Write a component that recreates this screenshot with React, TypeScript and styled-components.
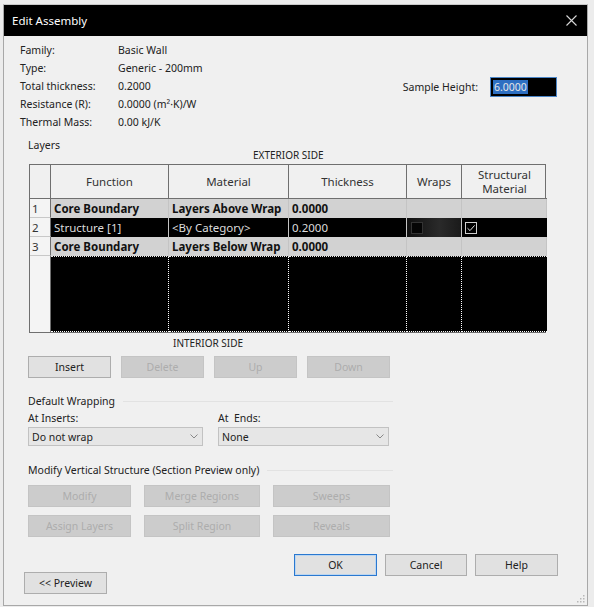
import React from "react";
import styled, { createGlobalStyle } from "styled-components";

const GlobalStyle = createGlobalStyle`
  html, body { margin: 0; padding: 0; }
  body {
    background: #ececec;
    font-family: "Noto Sans", "Open Sans", sans-serif;
    font-size: 10.5px;
    color: #222;
  }
`;

const Window = styled.div`
  margin: 4px 0 0 3px;
  width: 583px;
  height: 600px;
  background: #f0f0f0;
  border: 1px solid #a8a8a8;
  border-top-color: #c8c8c8;
  display: flex;
  flex-direction: column;
  position: relative;
`;

const TitleBar = styled.div`
  height: 31px;
  background: #000;
  color: #fff;
  display: flex;
  align-items: center;
  justify-content: space-between;
  padding: 0 10px 0 8px;
  font-size: 11.5px;
`;

const CloseBtn = styled.svg`
  width: 11px;
  height: 11px;
`;

const InfoBlock = styled.div`
  display: flex;
  padding: 5px 30px 0 16px;
`;

const InfoGrid = styled.div`
  display: grid;
  grid-template-columns: 98px 150px;
  grid-auto-rows: 18px;
  align-items: center;
`;

const SampleRow = styled.div`
  margin-left: auto;
  margin-top: 36px;
  display: flex;
  align-items: center;
  height: 20px;
`;

const SampleLabel = styled.span`
  margin-right: 12px;
`;

const SampleInput = styled.div`
  width: 63px;
  height: 18px;
  background: #000;
  border: 1px solid #4b86c8;
  display: flex;
  align-items: center;
  padding-left: 2px;
  box-sizing: content-box;
`;

const Selected = styled.span`
  background: #2d6fc2;
  color: #e6e6e6;
  line-height: 14px;
  padding: 0 1px;
`;

const Section = styled.div`
  padding-left: 24px;
  display: flex;
  flex-direction: column;
`;

const Label = styled.div<{ $mt?: number; $lh?: number }>`
  line-height: ${(p) => p.$lh ?? 14}px;
  margin-top: ${(p) => p.$mt ?? 0}px;
`;

const CenterCaption = styled.div<{ $mt: number; $left: number; $lh?: number }>`
  line-height: ${(p) => p.$lh ?? 14}px;
  margin-top: ${(p) => p.$mt}px;
  padding-left: ${(p) => p.$left}px;
  font-size: 10px;
`;

const Table = styled.div`
  margin: 4px 0 0 1px;
  width: 517px;
  display: grid;
  grid-template-columns: 21px 118px 120px 118px 55px 85px;
  grid-template-rows: 34px 19px 19px 19px 76px;
  border: 1px solid #6f6f6f;
  box-sizing: border-box;
  background: #f0f0f0;
`;

const HeadCell = styled.div<{ $last?: boolean }>`
  display: flex;
  align-items: center;
  justify-content: center;
  text-align: center;
  font-size: 11.5px;
  line-height: 14px;
  color: #333;
  border-right: ${(p) => (p.$last ? "none" : "1px solid #6f6f6f")};
  border-bottom: 1px solid #6f6f6f;
`;

const NumCell = styled.div`
  background: #f4f4f4;
  border-right: 1px solid #6f6f6f;
  padding-left: 2px;
  font-size: 11.5px;
  line-height: 19px;
  color: #333;
  border-bottom: 1px solid #c8c8c8;
`;

const Cell = styled.div<{ $kind: "core" | "sel" }>`
  background: ${(p) => (p.$kind === "sel" ? "#000" : "#d2d2d2")};
  color: ${(p) => (p.$kind === "sel" ? "#dcdcdc" : "#111")};
  font-weight: ${(p) => (p.$kind === "sel" ? 400 : 700)};
  font-size: 11.5px;
  line-height: 19px;
  padding-left: 3px;
  white-space: nowrap;
  overflow: hidden;
  border-right: 1px solid #c4c4c4;
  display: flex;
  align-items: center;
`;

const EmptyCell = styled.div<{ $last?: boolean }>`
  background: #000;
  border-right: ${(p) => (p.$last ? "none" : "1px dotted #fff")};
  border-bottom: 1px dotted #fff;
  border-top: 1px dotted #e8e8e8;
`;

const EmptyNum = styled.div`
  background: #f4f4f4;
  border-right: 1px solid #6f6f6f;
`;

const WrapsCell = styled.div`
  background: linear-gradient(90deg, #101010 0%, #2a2a2a 60%, #1a1a1a 100%);
  border-right: 1px solid #c4c4c4;
  display: flex;
  align-items: center;
  padding-left: 4px;
`;

const DarkBox = styled.div`
  width: 10px;
  height: 10px;
  background: #050505;
  border: 1px solid #333;
`;

const CheckBox = styled.svg`
  width: 12px;
  height: 12px;
  margin-left: 3px;
`;

const CheckCell = styled.div`
  background: #000;
  display: flex;
  align-items: center;
`;

const ButtonRow = styled.div<{ $mt: number; $gap: number }>`
  display: flex;
  gap: ${(p) => p.$gap}px;
  margin-top: ${(p) => p.$mt}px;
`;

const Button = styled.div<{ $w: number; $disabled?: boolean; $default?: boolean }>`
  width: ${(p) => p.$w}px;
  height: 22px;
  box-sizing: border-box;
  display: flex;
  align-items: center;
  justify-content: center;
  background: ${(p) => (p.$disabled ? "#cccccc" : "#e1e1e1")};
  border: 1px solid ${(p) => (p.$default ? "#2a78d0" : p.$disabled ? "#c4c4c4" : "#adadad")};
  box-shadow: ${(p) => (p.$default ? "inset 0 0 0 1px #bcd6f0" : "none")};
  color: ${(p) => (p.$disabled ? "#adadad" : "#222")};
  font-size: 10.5px;
`;

const GroupTitle = styled.div<{ $mt: number }>`
  display: flex;
  align-items: center;
  width: 365px;
  line-height: 14px;
  margin-top: ${(p) => p.$mt}px;
  &::after {
    content: "";
    flex: 1;
    height: 1px;
    background: #e2e2e2;
    margin-left: 8px;
  }
`;

const SelectsRow = styled.div`
  display: flex;
  margin-top: 3px;
`;

const SelectGroup = styled.div<{ $w: number; $ml?: number }>`
  width: ${(p) => p.$w}px;
  margin-left: ${(p) => p.$ml ?? 0}px;
  display: flex;
  flex-direction: column;
`;

const Select = styled.div`
  margin-top: 2px;
  height: 19px;
  box-sizing: border-box;
  border: 1px solid #c2c2c2;
  background: #e6e6e6;
  display: flex;
  align-items: center;
  justify-content: space-between;
  padding: 0 4px 0 3px;
`;

const Chevron = styled.svg`
  width: 8px;
  height: 5px;
`;

const Footer = styled.div`
  display: flex;
  align-items: flex-start;
  margin-top: 17px;
  padding-left: 20px;
`;

const PreviewWrap = styled.div`
  margin-top: 18px;
`;

const FooterRight = styled.div`
  margin-left: auto;
  margin-right: 29px;
  display: flex;
  gap: 8px;
`;

const Grip = styled.svg`
  position: absolute;
  right: 1px;
  bottom: 1px;
  width: 10px;
  height: 10px;
`;

const info: [string, string][] = [
  ["Family:", "Basic Wall"],
  ["Type:", "Generic - 200mm"],
  ["Total thickness:", "0.2000"],
  ["Resistance (R):", "0.0000 (m²·K)/W"],
  ["Thermal Mass:", "0.00 kJ/K"],
];

export default function App() {
  return (
    <>
      <GlobalStyle />
      <Window>
        <TitleBar>
          <span>Edit Assembly</span>
          <CloseBtn viewBox="0 0 11 11">
            <path d="M0.5 0.5 L10.5 10.5 M10.5 0.5 L0.5 10.5" stroke="#d8d8d8" strokeWidth="1.1" />
          </CloseBtn>
        </TitleBar>

        <InfoBlock>
          <InfoGrid>
            {info.map(([k, v]) => (
              <React.Fragment key={k}>
                <span>{k}</span>
                <span>{v}</span>
              </React.Fragment>
            ))}
          </InfoGrid>
          <SampleRow>
            <SampleLabel>Sample Height:</SampleLabel>
            <SampleInput>
              <Selected>6.0000</Selected>
            </SampleInput>
          </SampleRow>
        </InfoBlock>

        <Section>
          <Label $mt={9} $lh={10}>Layers</Label>
          <CenterCaption $mt={0} $left={225} $lh={10}>EXTERIOR SIDE</CenterCaption>
          <Table>
            <HeadCell />
            <HeadCell>Function</HeadCell>
            <HeadCell>Material</HeadCell>
            <HeadCell>Thickness</HeadCell>
            <HeadCell>Wraps</HeadCell>
            <HeadCell $last>
              Structural
              <br />
              Material
            </HeadCell>

            <NumCell>1</NumCell>
            <Cell $kind="core">Core Boundary</Cell>
            <Cell $kind="core">Layers Above Wrap</Cell>
            <Cell $kind="core">0.0000</Cell>
            <Cell $kind="core" />
            <Cell $kind="core" />

            <NumCell>2</NumCell>
            <Cell $kind="sel">Structure [1]</Cell>
            <Cell $kind="sel">&lt;By Category&gt;</Cell>
            <Cell $kind="sel">0.2000</Cell>
            <WrapsCell>
              <DarkBox />
            </WrapsCell>
            <CheckCell>
              <CheckBox viewBox="0 0 12 12">
                <rect x="0.5" y="0.5" width="11" height="11" fill="#000" stroke="#cfcfcf" />
                <path d="M2.5 6.2 L5 8.6 L9.6 3.4" fill="none" stroke="#e0e0e0" strokeWidth="1" />
              </CheckBox>
            </CheckCell>

            <NumCell>3</NumCell>
            <Cell $kind="core">Core Boundary</Cell>
            <Cell $kind="core">Layers Below Wrap</Cell>
            <Cell $kind="core">0.0000</Cell>
            <Cell $kind="core" />
            <Cell $kind="core" />

            <EmptyNum />
            <EmptyCell />
            <EmptyCell />
            <EmptyCell />
            <EmptyCell />
            <EmptyCell $last />
          </Table>
          <CenterCaption $mt={3} $left={145}>INTERIOR SIDE</CenterCaption>

          <ButtonRow $mt={6} $gap={10}>
            <Button $w={83}>Insert</Button>
            <Button $w={83} $disabled>Delete</Button>
            <Button $w={83} $disabled>Up</Button>
            <Button $w={83} $disabled>Down</Button>
          </ButtonRow>

          <GroupTitle $mt={16}>Default Wrapping</GroupTitle>
          <SelectsRow>
            <SelectGroup $w={175}>
              <Label>At Inserts:</Label>
              <Select>
                <span>Do not wrap</span>
                <Chevron viewBox="0 0 8 5">
                  <path d="M0.5 0.5 L4 4 L7.5 0.5" fill="none" stroke="#888" />
                </Chevron>
              </Select>
            </SelectGroup>
            <SelectGroup $w={171} $ml={15}>
              <Label>At&nbsp; Ends:</Label>
              <Select>
                <span>None</span>
                <Chevron viewBox="0 0 8 5">
                  <path d="M0.5 0.5 L4 4 L7.5 0.5" fill="none" stroke="#888" />
                </Chevron>
              </Select>
            </SelectGroup>
          </SelectsRow>

          <GroupTitle $mt={17}>Modify Vertical Structure (Section Preview only)</GroupTitle>
          <ButtonRow $mt={8} $gap={13}>
            <Button $w={103} $disabled>Modify</Button>
            <Button $w={116} $disabled>Merge Regions</Button>
            <Button $w={117} $disabled>Sweeps</Button>
          </ButtonRow>
          <ButtonRow $mt={8} $gap={13}>
            <Button $w={103} $disabled>Assign Layers</Button>
            <Button $w={116} $disabled>Split Region</Button>
            <Button $w={117} $disabled>Reveals</Button>
          </ButtonRow>
        </Section>

        <Footer>
          <PreviewWrap>
            <Button $w={83}>&lt;&lt; Preview</Button>
          </PreviewWrap>
          <FooterRight>
            <Button $w={83} $default>OK</Button>
            <Button $w={82}>Cancel</Button>
            <Button $w={83}>Help</Button>
          </FooterRight>
        </Footer>

        <Grip viewBox="0 0 10 10">
          <g fill="#b8b8b8">
            <rect x="7" y="1" width="1.5" height="1.5" />
            <rect x="4" y="4" width="1.5" height="1.5" />
            <rect x="7" y="4" width="1.5" height="1.5" />
            <rect x="1" y="7" width="1.5" height="1.5" />
            <rect x="4" y="7" width="1.5" height="1.5" />
            <rect x="7" y="7" width="1.5" height="1.5" />
          </g>
        </Grip>
      </Window>
    </>
  );
}
